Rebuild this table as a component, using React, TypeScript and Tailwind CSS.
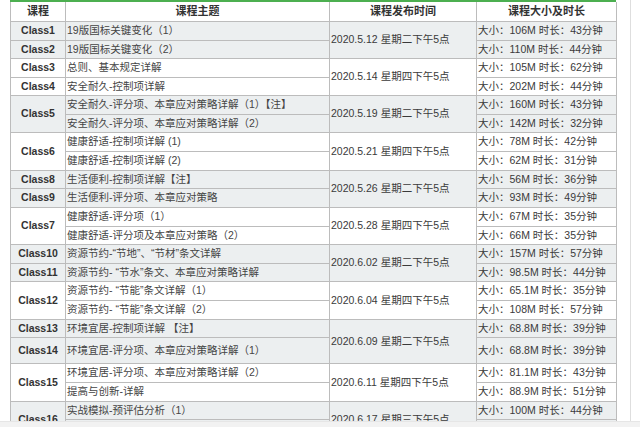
import React from 'react';

type Sub = { topic: string; size: string; h: string };
type Cls = { name: string; subs: Sub[] };
type Group = { date: string; classes: Cls[] };

const groups: Group[] = [
  {
    date: '2020.5.12 星期二下午5点',
    classes: [
      { name: 'Class1', subs: [{ topic: '19版国标关键变化（1）', size: '大小：106M 时长：43分钟', h: 'h-[19px]' }] },
      { name: 'Class2', subs: [{ topic: '19版国标关键变化（2）', size: '大小：110M 时长：44分钟', h: 'h-[18px]' }] },
    ],
  },
  {
    date: '2020.5.14 星期四下午5点',
    classes: [
      { name: 'Class3', subs: [{ topic: '总则、基本规定详解', size: '大小：105M 时长：62分钟', h: 'h-[19px]' }] },
      { name: 'Class4', subs: [{ topic: '安全耐久-控制项详解', size: '大小：202M 时长：44分钟', h: 'h-[18px]' }] },
    ],
  },
  {
    date: '2020.5.19 星期二下午5点',
    classes: [
      {
        name: 'Class5',
        subs: [
          { topic: '安全耐久-评分项、本章应对策略详解（1）【注】', size: '大小：160M 时长：43分钟', h: 'h-[19px]' },
          { topic: '安全耐久-评分项、本章应对策略详解（2）', size: '大小：142M 时长：32分钟', h: 'h-[18px]' },
        ],
      },
    ],
  },
  {
    date: '2020.5.21 星期四下午5点',
    classes: [
      {
        name: 'Class6',
        subs: [
          { topic: '健康舒适-控制项详解 (1)', size: '大小：78M 时长：42分钟', h: 'h-[19px]' },
          { topic: '健康舒适-控制项详解 (2)', size: '大小：62M 时长：31分钟', h: 'h-[19px]' },
        ],
      },
    ],
  },
  {
    date: '2020.5.26 星期二下午5点',
    classes: [
      { name: 'Class8', subs: [{ topic: '生活便利-控制项详解【注】', size: '大小：56M 时长：36分钟', h: 'h-[18px]' }] },
      { name: 'Class9', subs: [{ topic: '生活便利-评分项、本章应对策略', size: '大小：93M 时长：49分钟', h: 'h-[19px]' }] },
    ],
  },
  {
    date: '2020.5.28 星期四下午5点',
    classes: [
      {
        name: 'Class7',
        subs: [
          { topic: '健康舒适-评分项（1）', size: '大小：67M 时长：35分钟', h: 'h-[19px]' },
          { topic: '健康舒适-评分项及本章应对策略（2）', size: '大小：66M 时长：35分钟', h: 'h-[18px]' },
        ],
      },
    ],
  },
  {
    date: '2020.6.02 星期二下午5点',
    classes: [
      { name: 'Class10', subs: [{ topic: '资源节约-“节地”、“节材”条文详解', size: '大小：157M 时长：57分钟', h: 'h-[19px]' }] },
      { name: 'Class11', subs: [{ topic: '资源节约- “节水”条文、本章应对策略详解', size: '大小：98.5M 时长：44分钟', h: 'h-[18px]' }] },
    ],
  },
  {
    date: '2020.6.04 星期四下午5点',
    classes: [
      {
        name: 'Class12',
        subs: [
          { topic: '资源节约- “节能”条文详解（1）', size: '大小：65.1M 时长：35分钟', h: 'h-[19px]' },
          { topic: '资源节约- “节能”条文详解（2）', size: '大小：108M 时长：57分钟', h: 'h-[19px]' },
        ],
      },
    ],
  },
  {
    date: '2020.6.09 星期二下午5点',
    classes: [
      { name: 'Class13', subs: [{ topic: '环境宜居-控制项详解 【注】', size: '大小：68.8M 时长：39分钟', h: 'h-[18px]' }] },
      { name: 'Class14', subs: [{ topic: '环境宜居-评分项、本章应对策略详解（1）', size: '大小：68.8M 时长：39分钟', h: 'h-[26px]' }] },
    ],
  },
  {
    date: '2020.6.11 星期四下午5点',
    classes: [
      {
        name: 'Class15',
        subs: [
          { topic: '环境宜居-评分项、本章应对策略详解（2）', size: '大小：81.1M 时长：43分钟', h: 'h-[19px]' },
          { topic: '提高与创新-详解', size: '大小：88.9M 时长：51分钟', h: 'h-[19px]' },
        ],
      },
    ],
  },
  {
    date: '2020.6.17 星期三下午5点',
    classes: [
      {
        name: 'Class16',
        subs: [
          { topic: '实战模拟-预评估分析（1）', size: '大小：100M 时长：44分钟', h: 'h-[18px]' },
          { topic: '实战模拟-预评估分析（2）', size: '大小：96M 时长：41分钟', h: 'h-[19px]' },
        ],
      },
    ],
  },
];

export default function App() {
  const rows: React.ReactNode[] = [];

  groups.forEach((g, gi) => {
    const bg = gi % 2 === 0 ? 'bg-[#eceff0]' : 'bg-white';
    const span = g.classes.reduce((n, c) => n + c.subs.length, 0);
    g.classes.forEach((c, ci) => {
      c.subs.forEach((s, si) => {
        rows.push(
          <tr key={`${c.name}-${si}`} className={`${s.h} ${bg}`}>
            {si === 0 && (
              <td rowSpan={c.subs.length} className="border border-[#bcbcbc] text-center font-bold text-[#333]">
                {c.name}
              </td>
            )}
            <td className="border border-[#bcbcbc] pl-px text-[#444] whitespace-nowrap">{s.topic}</td>
            {ci === 0 && si === 0 && (
              <td rowSpan={span} className="border border-[#bcbcbc] pl-px text-[#3a3a3a] whitespace-nowrap">
                {g.date}
              </td>
            )}
            <td className="border border-[#bcbcbc] pl-px text-[#3a3a3a] whitespace-nowrap">{s.size}</td>
          </tr>
        );
      });
    });
  });

  return (
    <div
      className="w-[640px] h-[427px] overflow-hidden bg-white flex flex-col"
      style={{ fontFamily: '"Liberation Sans", "Noto Sans CJK SC", sans-serif' }}
    >
      <div className="flex-1 flex overflow-hidden">
        <div className="ml-[10px] w-[606px] border-t-2 border-[#4caf50]">
          <table className="w-[606px] table-fixed border-collapse text-[10.5px] leading-none">
            <colgroup>
              <col className="w-[55px]" />
              <col className="w-[264px]" />
              <col className="w-[147px]" />
              <col className="w-[140px]" />
            </colgroup>
            <thead>
              <tr className="h-[19px] bg-white font-bold text-[#333] text-[11px]">
                <th className="border border-[#bcbcbc] border-t-0 text-center">课程</th>
                <th className="border border-[#bcbcbc] border-t-0 text-center">课程主题</th>
                <th className="border border-[#bcbcbc] border-t-0 text-center">课程发布时间</th>
                <th className="border border-[#bcbcbc] border-t-0 text-center">课程大小及时长</th>
              </tr>
            </thead>
            <tbody>{rows}</tbody>
          </table>
        </div>
        <div className="w-[14px]" />
        <div className="w-px bg-[#dedede]" />
      </div>
      <div className="h-[6px] bg-[#f2f2f2] border-t border-[#e6e6e6]" />
    </div>
  );
}
